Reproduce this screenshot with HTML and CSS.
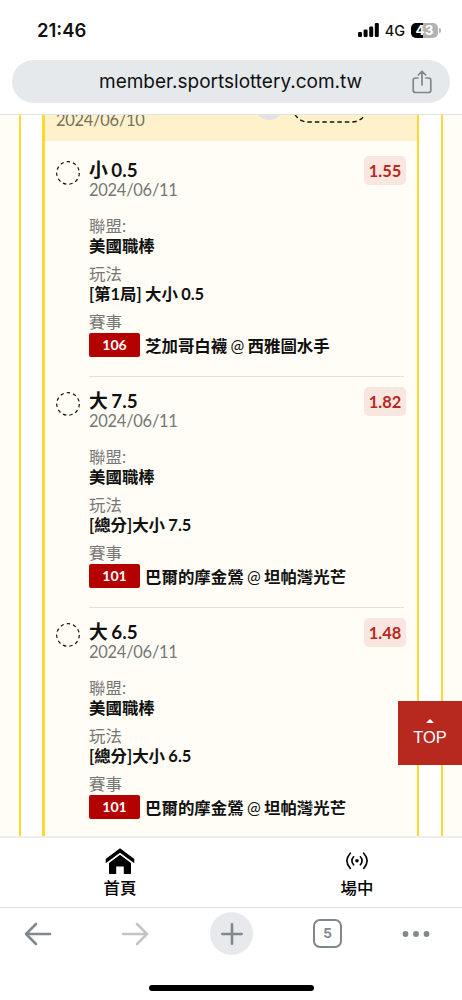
FILE: index.html
```html
<!DOCTYPE html>
<html lang="zh-Hant">
  <head>
    <meta charset="UTF-8" />
    <meta name="viewport" content="width=device-width, initial-scale=1.0" />
    <title>member.sportslottery.com.tw</title>
    <link rel="stylesheet" href="styles.css">
  </head>
  <body>
    <div class="status-bar">
      <span class="clock">21:46</span>
      <div class="status-icons">
        <svg class="signal" width="21" height="14" viewBox="0 0 21 14">
          <rect x="0" y="9" width="4" height="5" rx="1.2" />
          <rect x="5.6" y="6.5" width="4" height="7.5" rx="1.2" />
          <rect x="11.2" y="3.5" width="4" height="10.5" rx="1.2" />
          <rect x="16.8" y="0" width="4" height="14" rx="1.2" />
        </svg>
        <span class="network">4G</span>
        <span class="battery">43</span>
      </div>
    </div>

    <div class="address-bar">
      <span class="url">member.sportslottery.com.tw</span>
      <svg class="share" width="20" height="24" viewBox="0 0 20 24">
        <path d="M6 8H3.5Q1.2 8 1.2 10.3V20.2Q1.2 22.5 3.5 22.5H16.5Q18.8 22.5 18.8 20.2V10.3Q18.8 8 16.5 8H14M10 15V1.5M6.3 5L10 1.3L13.7 5" />
      </svg>
    </div>

    <main class="page">
      <div class="side"></div>
      <section class="slip">
        <div class="slip-header">
          <span class="header-date">2024/06/10</span>
          <span class="header-dot"></span>
          <svg class="header-pill" width="76" height="36" viewBox="0 0 76 36"><rect x="1" y="1" width="74" height="34" rx="15" /></svg>
        </div>

        <div class="picks">
          <article class="pick">
            <span class="pick-mark"><svg viewBox="0 0 24 24"><circle cx="12" cy="12" r="11.3" /></svg></span>
            <div class="pick-body">
              <span class="odds">1.55</span>
              <h2>小 0.5</h2>
              <p class="date">2024/06/11</p>
              <dl>
                <dt>聯盟:</dt>
                <dd>美國職棒</dd>
                <dt>玩法</dt>
                <dd>[第1局] 大小 0.5</dd>
                <dt>賽事</dt>
                <dd class="match"><span class="code">106</span><span>芝加哥白襪 <i>@</i> 西雅圖水手</span></dd>
              </dl>
            </div>
          </article>

          <article class="pick">
            <span class="pick-mark"><svg viewBox="0 0 24 24"><circle cx="12" cy="12" r="11.3" /></svg></span>
            <div class="pick-body">
              <span class="odds">1.82</span>
              <h2>大 7.5</h2>
              <p class="date">2024/06/11</p>
              <dl>
                <dt>聯盟:</dt>
                <dd>美國職棒</dd>
                <dt>玩法</dt>
                <dd>[總分]大小 7.5</dd>
                <dt>賽事</dt>
                <dd class="match"><span class="code">101</span><span>巴爾的摩金鶯 <i>@</i> 坦帕灣光芒</span></dd>
              </dl>
            </div>
          </article>

          <article class="pick">
            <span class="pick-mark"><svg viewBox="0 0 24 24"><circle cx="12" cy="12" r="11.3" /></svg></span>
            <div class="pick-body">
              <span class="odds">1.48</span>
              <h2>大 6.5</h2>
              <p class="date">2024/06/11</p>
              <dl>
                <dt>聯盟:</dt>
                <dd>美國職棒</dd>
                <dt>玩法</dt>
                <dd>[總分]大小 6.5</dd>
                <dt>賽事</dt>
                <dd class="match"><span class="code">101</span><span>巴爾的摩金鶯 <i>@</i> 坦帕灣光芒</span></dd>
              </dl>
            </div>
          </article>
        </div>
      </section>
      <div class="side side-right"></div>

      <a class="to-top" href="#">
        <svg width="8" height="4" viewBox="0 0 8 4"><path d="M0.3 4Q0.3 3.4 1 2.9L3.4 0.4Q4 0 4.6 0.4L7 2.9Q7.7 3.4 7.7 4Z" /></svg>
        <span>TOP</span>
      </a>
    </main>

    <nav class="site-nav">
      <a href="#">
        <svg width="30" height="27" viewBox="0 0 30 27">
          <path d="M15 0.3L29.3 11V15.3L15 4.8L0.7 15.3V11Z" />
          <path d="M15 6.8L26 15V26H18.8V18.5H11.2V26H4V15Z" />
        </svg>
        <span>首頁</span>
      </a>
      <a href="#">
        <svg class="live" width="24" height="27" viewBox="0 0 24 27">
          <circle cx="12" cy="12.8" r="1.8" />
          <path d="M8.6 8.8Q5.2 12.8 8.6 16.8M15.4 8.8Q18.8 12.8 15.4 16.8M5.3 5.2Q-1.6 12.8 5.3 20.4M18.7 5.2Q25.6 12.8 18.7 20.4" />
        </svg>
        <span>場中</span>
      </a>
    </nav>

    <footer class="toolbar">
      <svg class="arrow" width="28" height="24" viewBox="0 0 28 24"><path d="M26 12H2M12 2L2 12L12 22" /></svg>
      <svg class="arrow forward" width="28" height="24" viewBox="0 0 28 24"><path d="M2 12H26M16 2L26 12L16 22" /></svg>
      <span class="new-tab">
        <svg width="24" height="24" viewBox="0 0 24 24"><path d="M12 2.3V21.7M2.3 12H21.7" /></svg>
      </span>
      <span class="tab-count">5</span>
      <svg class="more" width="28" height="8" viewBox="0 0 28 8">
        <circle cx="3.5" cy="4" r="2.9" />
        <circle cx="14" cy="4" r="2.9" />
        <circle cx="24.5" cy="4" r="2.9" />
      </svg>
    </footer>
    <div class="home-indicator"></div>
  </body>
</html>
```
FILE: styles.css
```css
* {
  box-sizing: border-box;
}

body {
  margin: 0;
  height: 1000px;
  display: flex;
  flex-direction: column;
  overflow: hidden;
  background: #fff;
  color: #111;
  font-family: Lato, "Noto Sans CJK TC", sans-serif;
  font-size: 16.45px;
}

/* Phone status bar */
.status-bar {
  height: 60px;
  padding: 0 21px 0 37px;
  display: flex;
  justify-content: space-between;
  align-items: center;
  font-family: Inter, "Liberation Sans", sans-serif;
}

.clock {
  font-size: 18.5px;
  font-weight: 600;
}

.status-icons {
  display: flex;
  align-items: center;
}

.network {
  margin: 0 6px;
  font-size: 14.5px;
  font-weight: 500;
}

.battery {
  position: relative;
  width: 27px;
  height: 15px;
  margin-right: 3px;
  border-radius: 5px;
  background: linear-gradient(to right, #000 43%, #b2b2b2 43%);
  color: #fff;
  font-size: 13.5px;
  font-weight: 700;
  line-height: 15px;
  text-align: center;
}

.battery::after {
  content: "";
  position: absolute;
  right: -3px;
  top: 5px;
  width: 2px;
  height: 5px;
  border-radius: 0 2px 2px 0;
  background: #b2b2b2;
}

/* Address bar */
.address-bar {
  height: 43px;
  margin: 0 12px 11px;
  padding: 0 18px 0 87px;
  flex: none;
  display: flex;
  justify-content: space-between;
  align-items: center;
  border-radius: 22px;
  background: #e6e9ec;
}

.url {
  font-family: Inter, "Liberation Sans", sans-serif;
  font-size: 19px;
}

.share {
  fill: none;
  stroke: #7f868b;
  stroke-width: 1.7;
  stroke-linecap: round;
  stroke-linejoin: round;
}

/* Page content */
.page {
  position: relative;
  height: 722px;
  flex: none;
  display: flex;
  border-top: 1px solid #e2e2e2;
  overflow: hidden;
}

.side {
  width: 21px;
  background: #fffdf5;
  border-right: 2px solid #fdd835;
}

.side-right {
  margin-left: auto;
  border-right: 0;
  border-left: 2px solid #fdd835;
}

.slip {
  width: 377px;
  margin-left: 21px;
  border: solid #fdd835;
  border-width: 0 2px 0 3px;
  background: #fffdf5;
}

.slip-header {
  height: 26px;
  padding-left: 11px;
  display: flex;
  align-items: flex-end;
  overflow: hidden;
  background: #fff2cb;
}

.header-date {
  width: 90px;
  flex: none;
  margin-bottom: 11px;
  color: #77705f;
  letter-spacing: -0.25px;
  line-height: 20px;
}

.header-dot {
  width: 28px;
  height: 28px;
  flex: none;
  margin: 0 9px 21px 109px;
  border-radius: 50%;
  background: #e0e2e6;
}

.header-pill {
  flex: none;
  margin-bottom: 18px;
  fill: none;
  stroke: #111;
  stroke-width: 1.4;
  stroke-dasharray: 4.5 3;
}

.picks {
  padding: 5px 13px 0 11px;
}

.pick {
  display: flex;
  gap: 9px;
}

.pick-mark {
  width: 24px;
  height: 24px;
  margin-top: 15px;
}

.pick-mark svg {
  display: block;
  fill: none;
  stroke: #111;
  stroke-width: 1.2;
  stroke-dasharray: 3.4 3.05;
}

.pick-body {
  position: relative;
  flex: 1;
  height: 231px;
  padding-top: 14px;
  border-bottom: 1px solid #e3e1dc;
}

.pick:last-child .pick-body {
  border-bottom: 0;
}

.odds {
  position: absolute;
  top: 10px;
  right: -2px;
  width: 42px;
  height: 29px;
  border-radius: 5px;
  background: #f8e6df;
  color: #b8281e;
  font-weight: 700;
  line-height: 30px;
  text-align: center;
}

h2 {
  margin: 0;
  font-size: 18.8px;
  font-weight: 700;
  line-height: 20px;
  word-spacing: -1px;
}

.date {
  margin: 0 0 16px;
  color: #777;
  letter-spacing: -0.25px;
  line-height: 20px;
}

dl {
  margin: 0;
}

dt {
  color: #777;
  line-height: 20px;
}

dd {
  margin: 0 0 8px;
  font-weight: 700;
  line-height: 20px;
  word-spacing: -0.7px;
}

dd i {
  font-style: normal;
  font-weight: 400;
}

.match {
  display: flex;
  align-items: center;
  gap: 5px;
  height: 25px;
  padding-top: 1px;
  line-height: 22px;
  white-space: nowrap;
}

.match > span:last-child {
  padding-top: 2px;
}

.code {
  width: 51px;
  height: 24px;
  border-radius: 2px;
  background: #b50000;
  color: #fff;
  font-size: 14.1px;
  line-height: 24px;
  text-align: center;
}

.to-top {
  position: absolute;
  right: 0;
  bottom: 71px;
  width: 64px;
  height: 64px;
  display: flex;
  flex-direction: column;
  align-items: center;
  padding-top: 18px;
  gap: 4px;
  background: #b7281e;
  color: #fff;
  font-family: "Liberation Sans", Arial, sans-serif;
  line-height: 20px;
  text-decoration: none;
}

.to-top svg {
  fill: #fff;
}

/* Bottom site navigation */
.site-nav {
  height: 72px;
  flex: none;
  display: grid;
  grid-template-columns: 1fr 1fr;
  padding: 10px 0 0;
  margin: 0 -12px 0 0;
  border-top: 2px solid #eee;
  border-bottom: 1px solid #e3e3e3;
}

.site-nav a {
  padding-left: 3px;
  display: flex;
  flex-direction: column;
  align-items: center;
  color: #000;
  font-weight: 500;
  line-height: 26px;
  text-decoration: none;
}

.live path {
  fill: none;
  stroke: #000;
  stroke-width: 1.6;
  stroke-linecap: round;
}

/* Browser toolbar */
.toolbar {
  height: 51px;
  flex: none;
  display: grid;
  grid-template-columns: 75px 119px 75px 117px 60px;
  justify-items: center;
  align-items: center;
  color: #80888d;
}

.arrow,
.new-tab svg {
  fill: none;
  stroke: #80888d;
  stroke-width: 2.6;
  stroke-linecap: round;
  stroke-linejoin: round;
}

.arrow.forward {
  stroke: #c5c5c5;
}

.new-tab {
  width: 43px;
  height: 43px;
  display: flex;
  justify-content: center;
  align-items: center;
  border-radius: 50%;
  background: #e8e9ed;
}

.tab-count {
  width: 29px;
  height: 29px;
  border: 2.5px solid #80888d;
  border-radius: 7px;
  font-family: Inter, "Liberation Sans", sans-serif;
  font-size: 13.5px;
  font-weight: 700;
  line-height: 25px;
  text-align: center;
}

.more {
  fill: #80888d;
}

.home-indicator {
  width: 165px;
  height: 6px;
  flex: none;
  margin: 26px auto 0;
  border-radius: 3px;
  background: #000;
}
```
